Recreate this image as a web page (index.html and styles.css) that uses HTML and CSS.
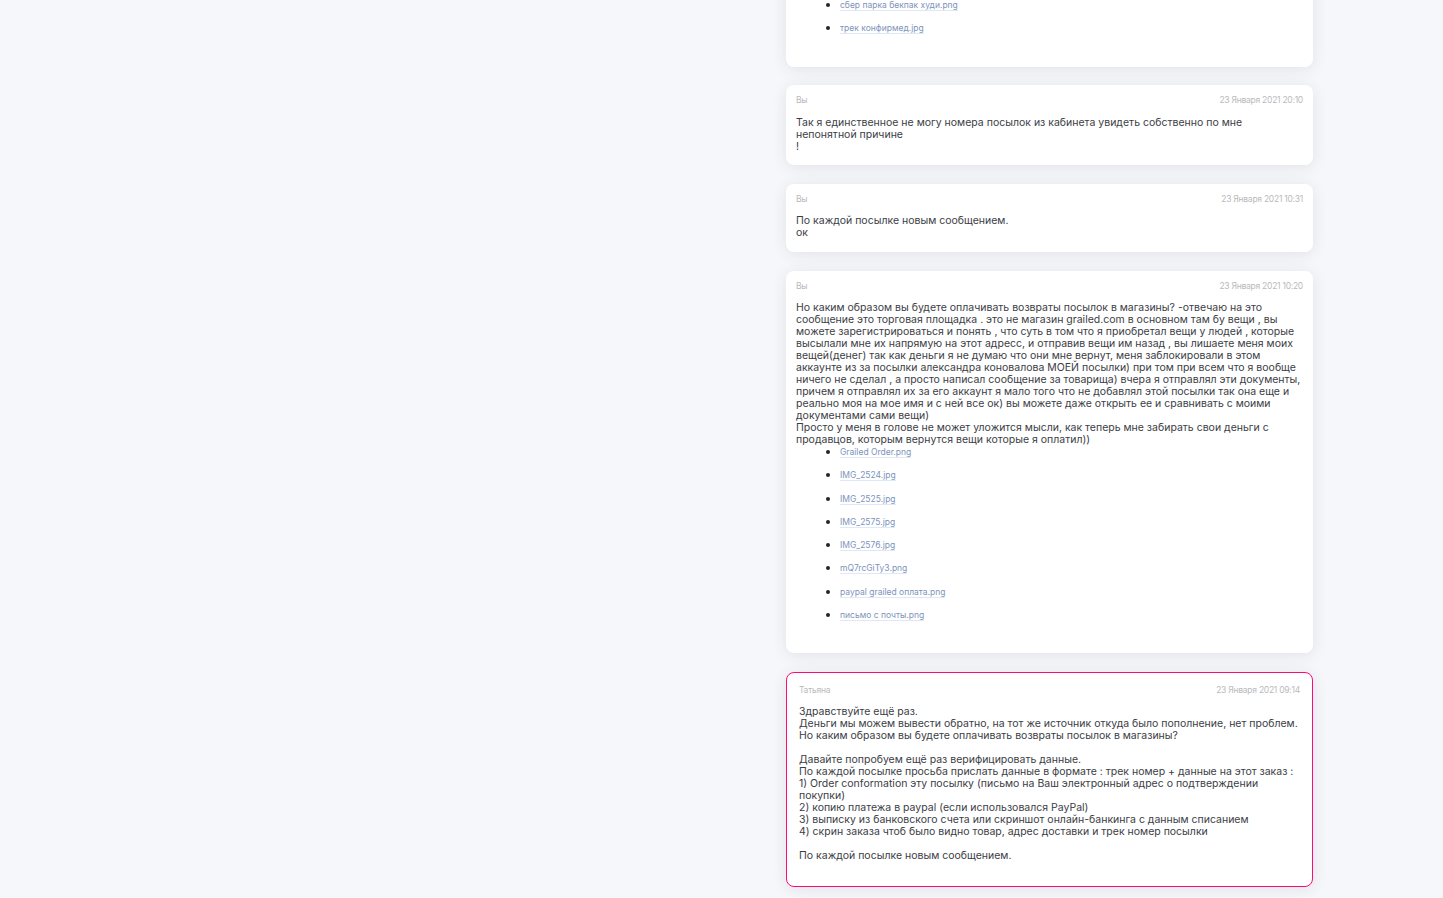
FILE: index.html
```html
<!DOCTYPE html>
<html lang="ru">
<head>
<meta charset="utf-8">
<title>Сообщения</title>
<link rel="stylesheet" href="styles.css">
</head>
<body>
<main class="thread">
  <article class="msg msg-clipped">
    <ul class="files">
      <li><a href="#">сбер парка бекпак худи.png</a></li>
      <li><a href="#">трек конфирмед.jpg</a></li>
    </ul>
  </article>
  <article class="msg">
    <header class="meta"><span>Вы</span><time>23 Января 2021 20:10</time></header>
    <p class="text">Так я единственное не могу номера посылок из кабинета увидеть собственно по мне<br>непонятной причине<br>!</p>
  </article>
  <article class="msg">
    <header class="meta"><span>Вы</span><time>23 Января 2021 10:31</time></header>
    <p class="text">По каждой посылке новым сообщением.<br>ок</p>
  </article>
  <article class="msg">
    <header class="meta"><span>Вы</span><time>23 Января 2021 10:20</time></header>
    <p class="text">Но каким образом вы будете оплачивать возвраты посылок в магазины? -отвечаю на это<br>сообщение это торговая площадка . это не магазин grailed.com в основном там бу вещи , вы<br>можете зарегистрироваться и понять , что суть в том что я приобретал вещи у людей , которые<br>высылали мне их напрямую на этот адресс, и отправив вещи им назад , вы лишаете меня моих<br>вещей(денег) так как деньги я не думаю что они мне вернут, меня заблокировали в этом<br>аккаунте из за посылки александра коновалова МОЕЙ посылки) при том при всем что я вообще<br>ничего не сделал , а просто написал сообщение за товарища) вчера я отправлял эти документы,<br>причем я отправлял их за его аккаунт я мало того что не добавлял этой посылки так она еще и<br>реально моя на мое имя и с ней все ок) вы можете даже открыть ее и сравнивать с моими<br>документами сами вещи)<br>Просто у меня в голове не может уложится мысли, как теперь мне забирать свои деньги с<br>продавцов, которым вернутся вещи которые я оплатил))</p>
    <ul class="files files-spaced">
      <li><a href="#">Grailed Order.png</a></li>
      <li><a href="#">IMG_2524.jpg</a></li>
      <li><a href="#">IMG_2525.jpg</a></li>
      <li><a href="#">IMG_2575.jpg</a></li>
      <li><a href="#">IMG_2576.jpg</a></li>
      <li><a href="#">mQ7rcGiTy3.png</a></li>
      <li><a href="#">paypal grailed оплата.png</a></li>
      <li><a href="#">письмо с почты.png</a></li>
    </ul>
  </article>
  <article class="msg msg-staff">
    <header class="meta"><span>Татьяна</span><time>23 Января 2021 09:14</time></header>
    <p class="text">Здравствуйте ещё раз.<br>Деньги мы можем вывести обратно, на тот же источник откуда было пополнение, нет проблем.<br>Но каким образом вы будете оплачивать возвраты посылок в магазины?<br><br>Давайте попробуем ещё раз верифицировать данные.<br>По каждой посылке просьба прислать данные в формате : трек номер + данные на этот заказ :<br>1) Order conformation эту посылку (письмо на Ваш электронный адрес о подтверждении<br>покупки)<br>2) копию платежа в paypal (если использовался PayPal)<br>3) выписку из банковского счета или скриншот онлайн-банкинга с данным списанием<br>4) скрин заказа чтоб было видно товар, адрес доставки и трек номер посылки<br><br>По каждой посылке новым сообщением.</p>
  </article>
</main>
</body>
</html>
```
FILE: styles.css
```css
html, body {
  margin: 0;
  height: 100%;
  overflow: hidden;
}
body {
  background: #f6f7fa;
  font-family: Inter, "Noto Sans", sans-serif;
  color: #3b3d45;
}
.thread {
  width: 527px;
  margin: -40px 0 0 786px;
  display: flex;
  flex-direction: column;
  gap: 18.8px;
}
.msg {
  box-sizing: border-box;
  background: #fff;
  border-radius: 8px;
  padding: 9px 10px 12.75px;
  box-shadow: 0 2px 15px rgba(40, 50, 80, .1);
}
.msg-clipped {
  height: 106.6px;
  padding-top: 38px;
}
.msg-staff {
  border: 1px solid #ff0a78;
  padding: 11.5px 12px 23.5px;
}
.meta {
  display: flex;
  justify-content: space-between;
  align-items: center;
  height: 12px;
  margin-bottom: 10.25px;
  font-size: 8.5px;
  letter-spacing: -.25px;
  color: #b9babd;
}
.msg-staff .meta {
  margin-bottom: 10px;
}
.text {
  margin: 0;
  font-size: 10.5px;
  line-height: 12px;
  white-space: nowrap;
}
.files {
  margin: 0;
  padding: 0 0 0 44px;
  font-size: 11px;
  line-height: 12px;
  list-style: disc;
}
.files-spaced {
  margin: -1px 0 19.25px;
}
.files li {
  margin-bottom: 10.25px;
  color: #23252b;
}
.files a {
  font-size: 8.5px;
  color: #7d93bb;
  text-decoration: none;
  border-bottom: 1px solid #dfe8f6;
}
```
